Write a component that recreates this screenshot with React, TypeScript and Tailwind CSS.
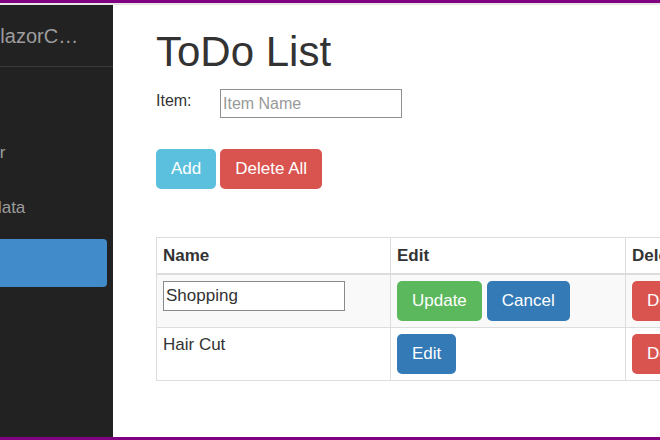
const navItems = [
  { label: "Home", active: false },
  { label: "Counter", active: false },
  { label: "Fetch data", active: false },
  { label: "Todo", active: true },
];

const todos = [
  { name: "Shopping", editing: true },
  { name: "Hair Cut", editing: false },
];

const btn = "h-[40px] rounded-[5px] px-[15px] text-[17px] leading-[40px] text-white";

export default function App() {
  return (
    <div className="flex h-[440px] w-[660px] flex-col overflow-hidden bg-white font-['Liberation_Sans',Arial,sans-serif] text-[#333]">
      <div className="h-[3px] bg-[#800080]" />
      <div className="h-[2px] bg-[#e6e6e6]" />

      <div className="flex min-h-0 flex-1">
        {/* sidebar */}
        <div className="w-[113px] shrink-0 overflow-hidden bg-[#222]">
          <div className="flex h-[62px] items-center border-b border-[#3c3c3c]">
            <div className="ml-[-13px] w-[96px] shrink-0 truncate whitespace-nowrap text-[20px] text-[#9d9d9d]">
              BlazorCrudApp
            </div>
          </div>
          <div className="mt-[7px] flex flex-col gap-[7px]">
            {navItems.map((item) => (
              <div
                key={item.label}
                className={`ml-[-60px] flex h-[48px] w-[167px] shrink-0 items-center rounded-[4px] pl-[5px] text-[17px] whitespace-nowrap ${
                  item.active ? "bg-[#428bca] text-white" : "text-[#9d9d9d]"
                }`}
              >
                {item.label}
              </div>
            ))}
          </div>
        </div>

        {/* main */}
        <div className="min-w-0 flex-1 overflow-hidden pl-[43px] pt-[23px]">
          <h1 className="text-[42px] leading-[48px] whitespace-nowrap">ToDo List</h1>

          <div className="mt-[13px] flex items-start">
            <label className="mt-[2px] w-[64px] text-[16px] leading-[20px]">Item:</label>
            <input
              placeholder="Item Name"
              className="h-[29px] w-[182px] border border-[#8f8f8f] px-[2px] text-[16px] text-[#333] placeholder:text-[#999] outline-none"
            />
          </div>

          <div className="mt-[31px] flex gap-[4px]">
            <button className={`${btn} bg-[#5bc0de]`}>Add</button>
            <button className={`${btn} bg-[#d9534f]`}>Delete All</button>
          </div>

          <table className="mt-[48px] w-[704px] table-fixed border-collapse text-[17px]">
            <thead>
              <tr>
                <th className="w-[234px] border border-b-2 border-[#ddd] px-[6px] pt-[6px] pb-[6px] text-left leading-[23px] font-bold">
                  Name
                </th>
                <th className="w-[235px] border border-b-2 border-[#ddd] px-[6px] pt-[6px] pb-[6px] text-left leading-[23px] font-bold">
                  Edit
                </th>
                <th className="border border-b-2 border-[#ddd] px-[6px] pt-[6px] pb-[6px] text-left leading-[23px] font-bold">
                  Delete
                </th>
              </tr>
            </thead>
            <tbody>
              {todos.map((t, i) => (
                <tr key={t.name} className={i % 2 === 0 ? "bg-[#f9f9f9]" : "bg-white"}>
                  <td className="h-[53px] border border-[#ddd] px-[6px] pt-[6px] pb-[6px] align-top leading-[22px]">
                    {t.editing ? (
                      <input
                        defaultValue={t.name}
                        className="block h-[30px] w-[182px] border border-[#8a8a8a] bg-white px-[2px] text-[17px] text-[#333] outline-none"
                      />
                    ) : (
                      t.name
                    )}
                  </td>
                  <td className="border border-[#ddd] px-[6px] pt-[6px] pb-[6px] align-top">
                    {t.editing ? (
                      <div className="flex gap-[5px]">
                        <button className={`${btn} bg-[#5cb85c]`}>Update</button>
                        <button className={`${btn} bg-[#337ab7]`}>Cancel</button>
                      </div>
                    ) : (
                      <button className={`${btn} bg-[#337ab7]`}>Edit</button>
                    )}
                  </td>
                  <td className="border border-[#ddd] px-[6px] pt-[6px] pb-[6px] align-top">
                    <button className={`${btn} bg-[#d9534f]`}>Delete</button>
                  </td>
                </tr>
              ))}
            </tbody>
          </table>
        </div>
      </div>

      <div className="h-[3px] bg-[#800080]" />
    </div>
  );
}
